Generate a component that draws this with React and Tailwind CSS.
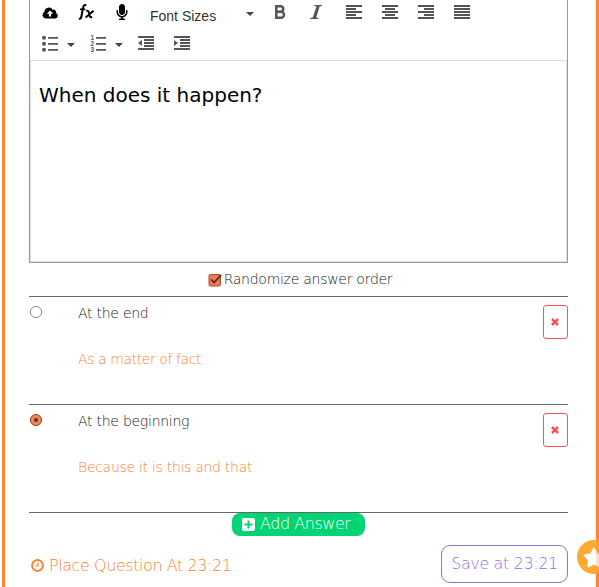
import React from "react";
import { FaStar, FaMicrophone } from "react-icons/fa";

const light = "font-['DejaVu_Sans_Light','DejaVu_Sans','Noto_Sans',sans-serif] font-extralight whitespace-nowrap";

// Five-bar paragraph glyph; each bar is [x, width].
function Bars({ bars, arrow }) {
  return (
    <svg width="16" height="14" viewBox="0 0 16 14" fill="#555" shapeRendering="crispEdges" className="block">
      {bars.map(([x, w], i) => (
        <rect key={i} x={x} y={i * 3} width={w} height="2" />
      ))}
      {arrow && <path d={arrow} shapeRendering="auto" />}
    </svg>
  );
}

function Caret({ className = "" }) {
  return (
    <svg width="8" height="4" viewBox="0 0 8 4" fill="#444" className={className}>
      <path d="M0 0h8L4 4z" />
    </svg>
  );
}

function ListIcon({ numbered }) {
  return (
    <svg width="17" height="17" viewBox="0 0 17 17" fill="#555" className="block">
      <path d="M6 2h10v1.7H6zM6 8h10v1.7H6zM6 14h10v1.7H6z" />
      {numbered ? (
        <g fontSize="6.5" fontFamily="Liberation Sans, sans-serif" fontWeight="bold">
          <text x="0.5" y="4.8">1</text>
          <text x="0.5" y="10.8">2</text>
          <text x="0.5" y="16.8">3</text>
        </g>
      ) : (
        <g>
          <circle cx="2" cy="2.7" r="2" />
          <circle cx="2" cy="8.7" r="2" />
          <circle cx="2" cy="14.7" r="2" />
        </g>
      )}
    </svg>
  );
}

function Toolbar() {
  return (
    <div className="h-[60px]">
      <div className="flex h-[26px] items-start pl-3">
        <svg width="17" height="12" viewBox="0 0 17 12" className="mt-[7px]">
          <path d="M3.8 11.5A3.6 3.6 0 0 1 2.4 4.8 4.5 4.5 0 0 1 10.7 2.7 2.7 2.7 0 0 1 14 6.1a2.8 2.8 0 0 1-.6 5.4z" />
          <path fill="#fff" d="M8 3.4l3.3 3.4H9.1v2.8H6.9V6.8H4.7z" />
        </svg>
        <svg width="17" height="17" viewBox="0 0 17 17" className="ml-[19px] mt-[4px]" fill="none" stroke="#000">
          <path strokeWidth="2" d="M8.3 1.2C6 .5 5.3 2 5 4L3.5 12c-.3 2-1 3.2-2.7 2.6" />
          <path strokeWidth="1.7" d="M2 5.3h5.3" />
          <path strokeWidth="2" d="M8.2 6.8c2.2-.4 2.4.4 3 3.2.5 2.8.9 3.5 3 3M15.6 6.7l-8 6.8" />
        </svg>
        <FaMicrophone className="ml-[21px] mt-[4px] h-4 w-3 text-black" />
        <span className="ml-[22px] w-[96px] pt-[6px] font-['Liberation_Sans',sans-serif] text-sm leading-5 text-[#333]">
          Font Sizes
        </span>
        <Caret className="mt-[12px]" />
        <svg width="12" height="14" viewBox="0 0 12 14" className="ml-[20px] mt-[5px]">
          <path fill="none" stroke="#555" strokeWidth="2.5" d="M2.3 1.3H6.5a2.6 2.6 0 0 1 0 5.4H2.3zM2.3 6.7H7a2.9 2.9 0 0 1 0 6H2.3z" />
        </svg>
        <svg width="12" height="14" viewBox="0 0 12 14" className="ml-[24px] mt-[5px]">
          <path fill="#555" d="M4.5 0H12l-.3 1.2h-2L6.2 12.8h2.2L8 14H0l.4-1.2h2.2L6.6 1.2H4.2z" />
        </svg>
        <div className="ml-[24px] mt-[5px] flex gap-5">
          <Bars bars={[[0, 16], [0, 10], [0, 16], [0, 10], [0, 16]]} />
          <Bars bars={[[0, 16], [3, 10], [0, 16], [3, 10], [0, 16]]} />
          <Bars bars={[[0, 16], [6, 10], [0, 16], [6, 10], [0, 16]]} />
          <Bars bars={[[0, 16], [0, 16], [0, 16], [0, 16], [0, 16]]} />
        </div>
      </div>
      <div className="flex h-[34px] items-center pl-3">
        <ListIcon />
        <Caret className="ml-2 mt-1" />
        <div className="ml-[15px]"><ListIcon numbered /></div>
        <Caret className="ml-2 mt-1" />
        <div className="ml-[15px] flex gap-5">
          <Bars bars={[[0, 16], [6, 10], [6, 10], [6, 10], [0, 16]]} arrow="M4 4v6L0 7z" />
          <Bars bars={[[0, 16], [6, 10], [6, 10], [6, 10], [0, 16]]} arrow="M0 4v6l4-3z" />
        </div>
      </div>
    </div>
  );
}

function Answer({ text, note, checked }) {
  return (
    <div className="flex h-[108px] border-t border-[#666]">
      <svg width="14" height="14" viewBox="0 0 14 14" className="mt-2 shrink-0">
        {checked ? (
          <g>
            <circle cx="7" cy="7" r="5.6" fill="#ee7850" stroke="#a34d32" />
            <circle cx="7" cy="7" r="3.7" fill="none" stroke="#f59870" />
            <circle cx="7" cy="7" r="2" fill="#64352b" />
          </g>
        ) : (
          <circle cx="7" cy="7" r="5.6" fill="#fff" stroke="#8c8c8c" />
        )}
      </svg>
      <div className={`${light} ml-[35px] flex-1 text-sm`}>
        <p className="mt-[6px] leading-5 tracking-[-0.26px] text-[#222]">{text}</p>
        <p className={`mt-[26px] leading-5 text-[#ff8235] ${checked ? "tracking-[-0.29px]" : "tracking-[-0.42px]"}`}>{note}</p>
      </div>
      <button className="mt-2 flex h-[34px] w-[25px] items-center justify-center rounded-[3px] border border-[#ff5050]">
        <svg width="8" height="8" viewBox="0 0 8 8" className="mr-px">
          <path stroke="#ff5050" strokeWidth="2.5" d="M1 1l6 6M7 1L1 7" />
        </svg>
      </button>
    </div>
  );
}

export default function App() {
  return (
    <main className="relative h-[587px] w-[599px] overflow-hidden bg-white pl-[2px]">
      <div className="h-full border-x-[3px] border-[#ff8235] pr-[28px] pl-[24px]">
        <section className="h-[263px] border border-t-0 border-[#999]">
          <Toolbar />
          <div className="h-[202px] border border-[#ddd] pl-[8px] pt-[22px] font-['DejaVu_Sans',sans-serif] text-xl leading-6 text-black">
            When does it happen?
          </div>
        </section>
        <label className={`${light} flex h-[33px] items-center justify-center pl-[3px] text-sm tracking-[-0.27px] text-[#222]`}>
          <svg width="14" height="14" viewBox="0 0 14 14" className="mr-[2px]">
            <rect x="1" y="1.5" width="11.5" height="11.5" rx="1.5" fill="#ee7850" stroke="#a34d32" />
            <path fill="none" stroke="#51291f" strokeWidth="1.8" d="M3.2 6.5L6 9.5 13.2 2" />
          </svg>
          <span className="pb-[2px]">Randomize answer order</span>
        </label>
        <Answer text="At the end" note="As a matter of fact" />
        <Answer text="At the beginning" note="Because it is this and that" checked />
        <div className="flex h-[33px] justify-center border-t border-[#666]">
          <button className={`${light} flex h-[23px] w-[133px] items-center rounded-lg bg-[#00d474] pl-[10px] text-base leading-5 tracking-[-0.45px] text-white`}>
            <svg width="13" height="13" viewBox="0 0 13 13" className="mr-[5px]">
              <rect width="13" height="13" rx="2" fill="#fff" />
              <path stroke="#00d474" strokeWidth="2" d="M6.5 2.5v8M2.5 6.5h8" />
            </svg>
            <span className="pb-[2px]">Add Answer</span>
          </button>
        </div>
        <footer className="flex h-[38px] items-start justify-between">
          <div className={`${light} flex items-center pl-[2px] pt-[8px] text-base tracking-[-0.43px] text-[#ff8235]`}>
            <svg width="13" height="13" viewBox="0 0 13 13" className="mr-[5px]" fill="none" stroke="#ff8235">
              <circle cx="6.5" cy="6.5" r="5.4" strokeWidth="2" />
              <path strokeWidth="1.2" d="M7 3.2V7H4" />
            </svg>
            <span className="mt-px -mb-px">Place Question At 23:21</span>
          </div>
          <button className={`${light} h-[38px] w-[127px] rounded-[9px] border border-[#9370db] text-base tracking-[-0.38px] text-[#9370db]`}>
            Save at 23:21
          </button>
        </footer>
      </div>
      <div className="absolute top-[540px] left-[577px] flex h-[34px] w-[34px] items-center justify-center rounded-full bg-[#ffa931]">
        <FaStar className="h-[21px] w-[22px] text-white" />
      </div>
      <div className="absolute top-[540px] right-0 h-[34px] w-[3px] bg-[#ff8235]/25" />
    </main>
  );
}
